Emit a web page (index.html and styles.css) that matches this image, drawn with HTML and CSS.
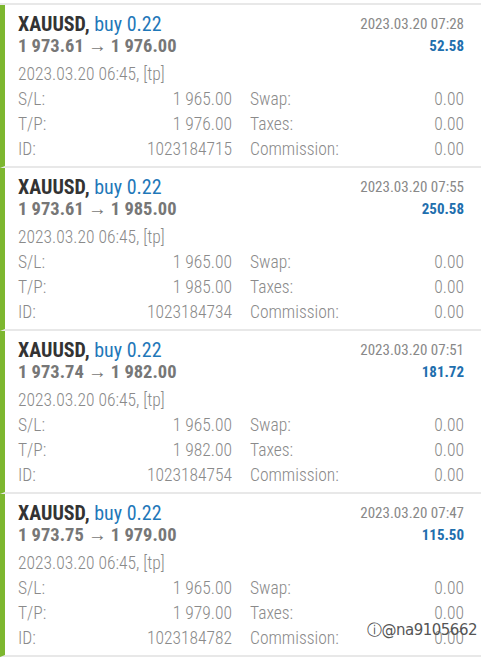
FILE: index.html
```html
<!DOCTYPE html>
<html>
<head>
<meta charset="utf-8">
<link rel="stylesheet" href="styles.css">
</head>
<body>
<div class="list">
  <div class="card">
    <div class="head">
      <div class="left">
        <div class="title">XAUUSD, <span class="buy">buy 0.22</span></div>
        <div class="price">1 973.61 → 1 976.00</div>
      </div>
      <div class="right">
        <div class="time">2023.03.20 07:28</div>
        <div class="profit">52.58</div>
      </div>
    </div>
    <div class="date">2023.03.20 06:45, [tp]</div>
    <div class="grid">
      <div class="row"><span>S/L:</span><span>1 965.00</span></div>
      <div class="row"><span>Swap:</span><span>0.00</span></div>
      <div class="row"><span>T/P:</span><span>1 976.00</span></div>
      <div class="row"><span>Taxes:</span><span>0.00</span></div>
      <div class="row"><span>ID:</span><span>1023184715</span></div>
      <div class="row"><span>Commission:</span><span>0.00</span></div>
    </div>
  </div>
  <div class="card">
    <div class="head">
      <div class="left">
        <div class="title">XAUUSD, <span class="buy">buy 0.22</span></div>
        <div class="price">1 973.61 → 1 985.00</div>
      </div>
      <div class="right">
        <div class="time">2023.03.20 07:55</div>
        <div class="profit">250.58</div>
      </div>
    </div>
    <div class="date">2023.03.20 06:45, [tp]</div>
    <div class="grid">
      <div class="row"><span>S/L:</span><span>1 965.00</span></div>
      <div class="row"><span>Swap:</span><span>0.00</span></div>
      <div class="row"><span>T/P:</span><span>1 985.00</span></div>
      <div class="row"><span>Taxes:</span><span>0.00</span></div>
      <div class="row"><span>ID:</span><span>1023184734</span></div>
      <div class="row"><span>Commission:</span><span>0.00</span></div>
    </div>
  </div>
  <div class="card">
    <div class="head">
      <div class="left">
        <div class="title">XAUUSD, <span class="buy">buy 0.22</span></div>
        <div class="price">1 973.74 → 1 982.00</div>
      </div>
      <div class="right">
        <div class="time">2023.03.20 07:51</div>
        <div class="profit">181.72</div>
      </div>
    </div>
    <div class="date">2023.03.20 06:45, [tp]</div>
    <div class="grid">
      <div class="row"><span>S/L:</span><span>1 965.00</span></div>
      <div class="row"><span>Swap:</span><span>0.00</span></div>
      <div class="row"><span>T/P:</span><span>1 982.00</span></div>
      <div class="row"><span>Taxes:</span><span>0.00</span></div>
      <div class="row"><span>ID:</span><span>1023184754</span></div>
      <div class="row"><span>Commission:</span><span>0.00</span></div>
    </div>
  </div>
  <div class="card">
    <div class="head">
      <div class="left">
        <div class="title">XAUUSD, <span class="buy">buy 0.22</span></div>
        <div class="price">1 973.75 → 1 979.00</div>
      </div>
      <div class="right">
        <div class="time">2023.03.20 07:47</div>
        <div class="profit">115.50</div>
      </div>
    </div>
    <div class="date">2023.03.20 06:45, [tp]</div>
    <div class="grid">
      <div class="row"><span>S/L:</span><span>1 965.00</span></div>
      <div class="row"><span>Swap:</span><span>0.00</span></div>
      <div class="row"><span>T/P:</span><span>1 979.00</span></div>
      <div class="row"><span>Taxes:</span><span>0.00</span></div>
      <div class="row"><span>ID:</span><span>1023184782</span></div>
      <div class="row"><span>Commission:</span><span>0.00</span></div>
    </div>
    <div class="watermark">ⓘ@na9105662</div>
  </div>
</div>
</body>
</html>
```
FILE: styles.css
```css
html, body {
  margin: 0;
  padding: 0;
  background: #ffffff;
}
body {
  width: 481px;
  height: 660px;
  overflow: hidden;
  font-family: "Roboto Condensed", "Liberation Sans Narrow", Roboto, "Liberation Sans", sans-serif;
}
.list {
  border-top: 2px solid #e8e8e8;
  margin-top: 3px;
}
.card {
  position: relative;
  border-left: 5px solid #7db72f;
  border-bottom: 2px solid #e8e8e8;
  padding: 8px 17px 4px 13px;
}
.head {
  display: flex;
  justify-content: space-between;
}
.title {
  font-size: 20px;
  line-height: 22px;
  font-weight: bold;
  color: #333333;
}
.buy {
  font-weight: normal;
  color: #1f78b9;
}
.price {
  font-size: 18.5px;
  line-height: 22px;
  font-weight: bold;
  color: #777777;
}
.right {
  text-align: right;
}
.time {
  font-size: 15px;
  line-height: 22px;
  color: #888888;
}
.profit {
  font-size: 15px;
  line-height: 22px;
  font-weight: bold;
  color: #1f6fae;
}
.date {
  margin-top: 5px;
  font-size: 17.5px;
  line-height: 25px;
  font-weight: 300;
  color: #8a8a8a;
}
.grid {
  display: grid;
  grid-template-columns: 1fr 1fr;
  column-gap: 18px;
}
.row {
  display: flex;
  justify-content: space-between;
  font-size: 17.5px;
  line-height: 25px;
  font-weight: 300;
  color: #8a8a8a;
}
.watermark {
  position: absolute;
  right: 4px;
  bottom: 15px;
  font-family: "DejaVu Sans", sans-serif;
  font-size: 15px;
  color: #555555;
  letter-spacing: -0.5px;
}
```
